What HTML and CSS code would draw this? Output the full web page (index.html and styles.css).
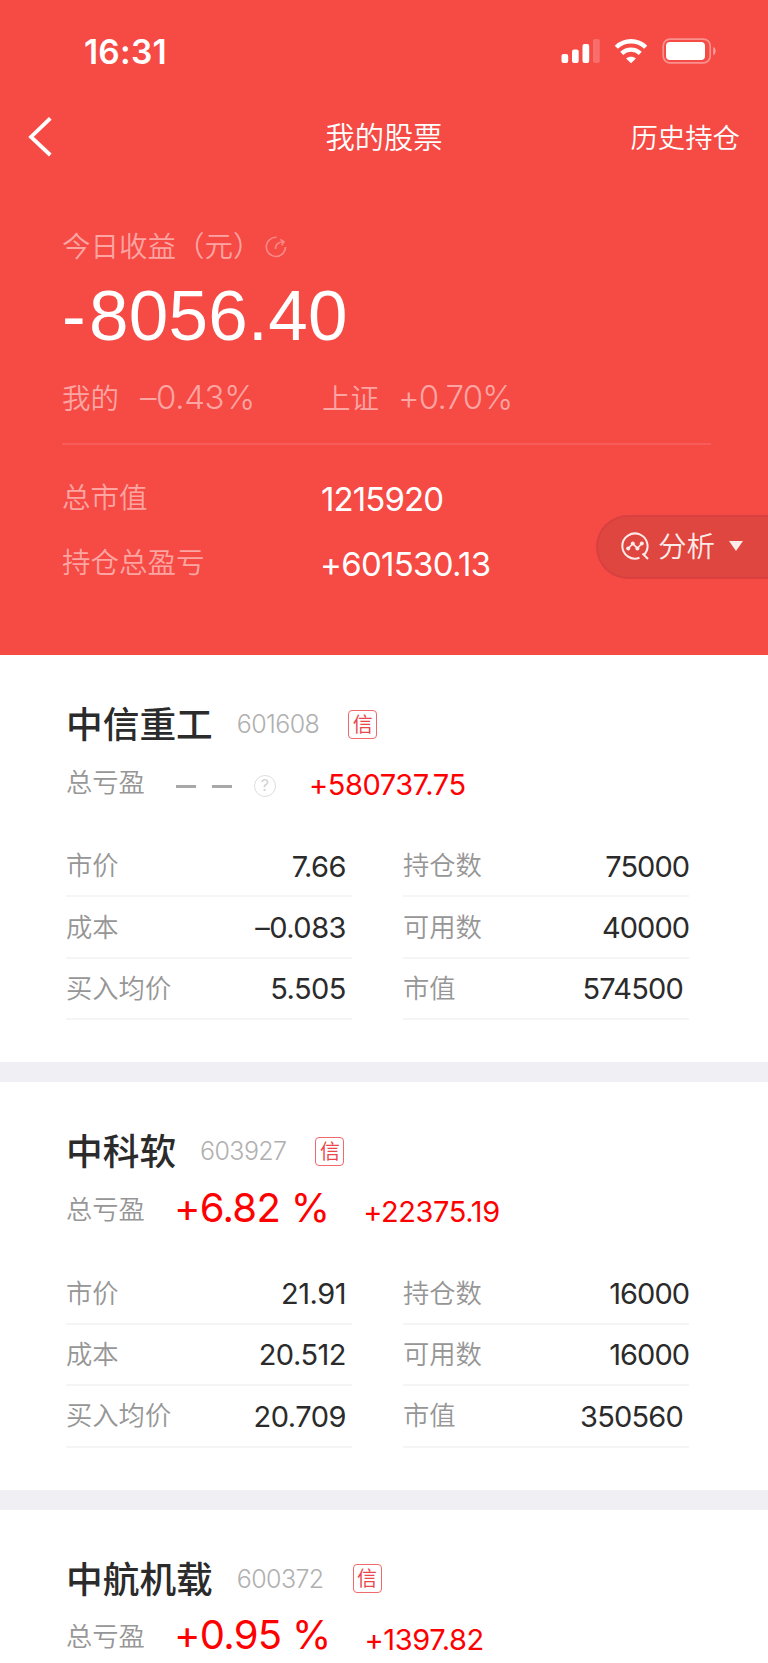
FILE: index.html
```
<!DOCTYPE html>
<html lang="zh-CN">
<head>
    <meta charset="UTF-8">
    <meta name="viewport" content="width=device-width, initial-scale=1.0">
    <title>我的股票</title>
    <link rel="stylesheet" href="styles.css">
</head>

<body>
    <header class="header">
        <div class="status-bar">
            <span class="time">16:31</span>
            <svg class="status-icons" width="158" height="30" viewBox="0 0 158 30">
                <g fill="#fff">
                    <rect x="1.5" y="17" width="6.7" height="9" rx="2"/>
                    <rect x="12" y="12.5" width="6.7" height="13.5" rx="2"/>
                    <rect x="22.5" y="7" width="6.7" height="19" rx="2"/>
                    <rect x="33" y="2" width="6.8" height="24" rx="2" opacity=".2"/>
                    <path d="M71 26.2l-4.9-4.6c2.6-2.4 7.2-2.4 9.8 0z"/>
                </g>
                <g fill="none" stroke="#fff" stroke-width="4.4">
                    <path d="M56.3 10.2c8.2-8 21.2-8 29.4 0"/>
                    <path d="M61.7 16.3c5.3-4.9 13.3-4.9 18.6 0"/>
                </g>
                <rect x="103.2" y="2.2" width="47" height="23.6" rx="6.8" fill="none" stroke="#fff" stroke-width="1.7" opacity=".4"/>
                <rect x="106" y="5" width="39" height="18" rx="4" fill="#fff"/>
                <path d="M153.300 10c3 1.200 3 7 0 8.200z" fill="#fff" opacity=".5"/>
            </svg>
        </div>
        <nav class="nav">
            <svg class="back" width="24" height="40" viewBox="0 0 24 40">
                <path d="M22.3 1.3L3 20l19.300 18" fill="none" stroke="#fff" stroke-width="3.8"/>
            </svg>
            <h1>我的股票</h1>
            <a class="history">历史持仓</a>
        </nav>
        <section class="summary">
            <div class="today-label"><span>今日收益（元）</span>
                <svg class="refresh" width="22" height="22" viewBox="0 0 22 22" fill="none" stroke="#fff" stroke-width="1.6">
                    <path d="M11.5 1.3A9.600 9.600 0 1 0 20.500 11"/>
                    <path d="M10.5 13c-.3-4.500 2.500-7 8-7.200M15.200 3.300l3.800 2.500-2.500 3.500"/>
                </svg>
            </div>
            <div class="today-value"><span class="sign">-</span>8056.40</div>
            <div class="compare">
                <div class="compare-item"><span>我的</span><span class="num">–0.43%</span></div>
                <div class="compare-item"><span>上证</span><span class="num plus">+0.70%</span></div>
            </div>
            <dl class="totals">
                <dt>总市值</dt><dd>1215920</dd>
                <dt>持仓总盈亏</dt><dd class="plus">+601530.13</dd>
            </dl>
        </section>
        <div class="analysis">
            <svg width="28" height="28" viewBox="0 0 28 28" fill="none" stroke="#fdebea" stroke-width="2">
                <path d="M22.9 22.9A12.6 12.6 0 1 0 18.5 25.8M21.5 21.5l5.5 5.500"/>
                <path d="M7.2 16.5l4.6-4.8 4.6 4.6 4.4-4.800" stroke-width="1.7"/>
                <g fill="#fdebea" stroke="none">
                    <circle cx="7.2" cy="16.6" r="2"/><circle cx="11.8" cy="11.6" r="2"/>
                    <circle cx="16.4" cy="16.4" r="2"/><circle cx="20.8" cy="11.5" r="2"/>
                </g>
            </svg>
            <span>分析</span>
            <i class="caret"></i>
        </div>
    </header>

    <main>
        <article class="stock">
            <div class="stock-head"><h2>中信重工</h2><span class="code">601608</span><span class="badge">信</span></div>
            <div class="profit">
                <span class="label">总亏盈</span>
                <span class="empty"><i></i><i></i></span>
                <span class="help">?</span>
                <span class="amount near">+580737.75</span>
            </div>
            <div class="cols">
                <ul>
                    <li><span>市价</span><b>7.66</b></li>
                    <li><span>成本</span><b>–0.083</b></li>
                    <li><span>买入均价</span><b>5.505</b></li>
                </ul>
                <ul>
                    <li><span>持仓数</span><b>75000</b></li>
                    <li><span>可用数</span><b>40000</b></li>
                    <li><span>市值</span><b>574500</b></li>
                </ul>
            </div>
        </article>

        <article class="stock">
            <div class="stock-head"><h2>中科软</h2><span class="code">603927</span><span class="badge">信</span></div>
            <div class="profit">
                <span class="label">总亏盈</span>
                <span class="rate">+6.82 %</span>
                <span class="amount">+22375.19</span>
            </div>
            <div class="cols">
                <ul>
                    <li><span>市价</span><b>21.91</b></li>
                    <li><span>成本</span><b>20.512</b></li>
                    <li><span>买入均价</span><b>20.709</b></li>
                </ul>
                <ul>
                    <li><span>持仓数</span><b>16000</b></li>
                    <li><span>可用数</span><b>16000</b></li>
                    <li><span>市值</span><b>350560</b></li>
                </ul>
            </div>
        </article>

        <article class="stock last">
            <div class="stock-head"><h2>中航机载</h2><span class="code">600372</span><span class="badge">信</span></div>
            <div class="profit">
                <span class="label">总亏盈</span>
                <span class="rate">+0.95 %</span>
                <span class="amount">+1397.82</span>
            </div>
        </article>
    </main>
</body>
</html>
```
FILE: styles.css
```
* {
    box-sizing: border-box;
}

body {
    margin: 0;
    height: 1663px;
    overflow: hidden;
    background-color: #fff;
    font-family: Inter, "Noto Sans CJK SC", sans-serif;
    font-weight: 350;
    color: #2b2b2b;
}

h1, h2, ul, dl, dd {
    margin: 0;
    padding: 0;
    font-weight: inherit;
}

svg {
    display: block;
    flex: none;
}

.header {
    position: relative;
    height: 655px;
    background-color: #f64a45;
    color: #fff;
}

.status-bar {
    display: flex;
    justify-content: space-between;
    height: 102px;
    padding: 31px 50px 0 84px;
}

.time {
    font-size: 33.5px;
    font-weight: 600;
    line-height: 42px;
    letter-spacing: 0.2px;
}

.status-icons {
    margin-top: 6px;
}

.nav {
    display: grid;
    grid-template-columns: 1fr auto 1fr;
    align-items: center;
    height: 70px;
    padding: 0 28px;
}

.nav h1 {
    padding-bottom: 4px;
    font-size: 29.3px;
}

.history {
    justify-self: end;
    padding-bottom: 3px;
    font-size: 27.4px;
}

.summary {
    padding: 54px 57px 0 62px;
}

.today-label {
    display: flex;
    align-items: center;
    gap: 3px;
    height: 42px;
    font-size: 28.5px;
    color: #fca5a2;
}

.today-label span {
    padding-bottom: 5px;
}

.refresh {
    opacity: 0.35;
}

.today-value {
    height: 96px;
    font-family: "Liberation Sans", sans-serif;
    font-size: 71px;
    font-weight: 400;
    line-height: 96px;
    letter-spacing: 0.3px;
}

.sign {
    margin-right: 3px;
}

.compare {
    display: grid;
    grid-template-columns: 260px 1fr;
    height: 81px;
    padding-top: 12px;
    border-bottom: 2px solid #f75c58;
    color: #fca5a2;
}

.compare-item {
    display: flex;
    gap: 21px;
    height: 42px;
    font-size: 28.5px;
    line-height: 46px;
}

.compare .num {
    font-size: 33px;
    line-height: 42px;
    letter-spacing: -0.4px;
}

.compare .plus {
    margin-left: -2px;
    letter-spacing: -0.8px;
}

.totals {
    display: grid;
    grid-template-columns: 259px 1fr;
    grid-auto-rows: 65px;
    align-items: center;
    padding-top: 19px;
}

.totals dt {
    padding-bottom: 2px;
    font-size: 28.5px;
    color: #fca5a2;
}

.totals dd {
    padding-top: 4px;
    font-size: 33px;
    font-weight: 400;
    letter-spacing: -0.9px;
}

.totals .plus {
    margin-left: -1px;
    letter-spacing: -0.7px;
}

/* floating button, stuck to the right edge */
.analysis {
    position: absolute;
    top: 515px;
    right: 0;
    display: flex;
    align-items: center;
    width: 172px;
    height: 64px;
    padding: 0 0 2px 23px;
    border: 2px solid #d94040;
    border-right: 0;
    border-radius: 32px 0 0 32px;
    background-color: #de463f;
    color: #fdebea;
    font-size: 28.5px;
}

.analysis span {
    margin: 0 14px 0 9px;
    padding-bottom: 3px;
}

.caret {
    border: 7px solid transparent;
    border-top: 10px solid #fdebea;
    border-bottom: 0;
}

.stock {
    height: 427.4px;
    padding: 40px 79px 0 66px;
    border-bottom: 20px solid #efeff4;
}

.stock.last {
    height: 153px;
    border-bottom: 0;
    overflow: hidden;
}

.stock-head {
    display: flex;
    align-items: center;
    height: 58px;
}

.stock h2 {
    padding-bottom: 4px;
    font-size: 36.7px;
    font-weight: 500;
}

.code {
    margin: 0 29px 0 24px;
    font-size: 25px;
    letter-spacing: -0.6px;
    color: #b0b0b0;
}

.badge {
    width: 29px;
    height: 29px;
    border: 1.5px solid #f0696c;
    border-radius: 4px;
    color: #e8484c;
    font-size: 20px;
    font-weight: 400;
    line-height: 28px;
    text-align: center;
}

.profit {
    display: flex;
    align-items: center;
    height: 60px;
}

.label,
li span {
    padding-bottom: 4px;
    font-size: 26.3px;
    color: #969696;
}

.profit .label {
    padding-bottom: 6px;
}

.empty {
    display: flex;
    gap: 16px;
    margin: 7px 22px 0 31px;
}

.empty i {
    width: 20px;
    height: 3px;
    background-color: #a8a8a8;
}

.help {
    width: 22px;
    height: 22px;
    margin-top: 6px;
    border: 1.5px solid #dedede;
    border-radius: 50%;
    color: #d2d2d2;
    font-size: 16px;
    font-weight: 400;
    line-height: 19px;
    text-align: center;
}

.rate {
    margin-left: 29px;
    padding-bottom: 6px;
    font-size: 40px;
    font-weight: 400;
    letter-spacing: -0.7px;
    color: #f00;
}

.amount {
    margin: 3px 0 0 34px;
    font-size: 29px;
    font-weight: 400;
    letter-spacing: -0.4px;
    color: #f00;
}

.amount.near {
    margin-left: 33px;
}

.cols {
    display: grid;
    grid-template-columns: 286px 286px;
    gap: 51px;
    padding-top: 23px;
}

li {
    display: flex;
    align-items: center;
    justify-content: space-between;
    height: 61.4px;
    border-bottom: 2px solid #f5f5f6;
}

li b {
    padding: 1px 6px 0 0;
    font-size: 29px;
    font-weight: 400;
    letter-spacing: -0.5px;
}

ul + ul b {
    padding-right: 0;
    letter-spacing: -1px;
}

ul + ul li:last-child b {
    padding-right: 6px;
    letter-spacing: -0.8px;
}
```
